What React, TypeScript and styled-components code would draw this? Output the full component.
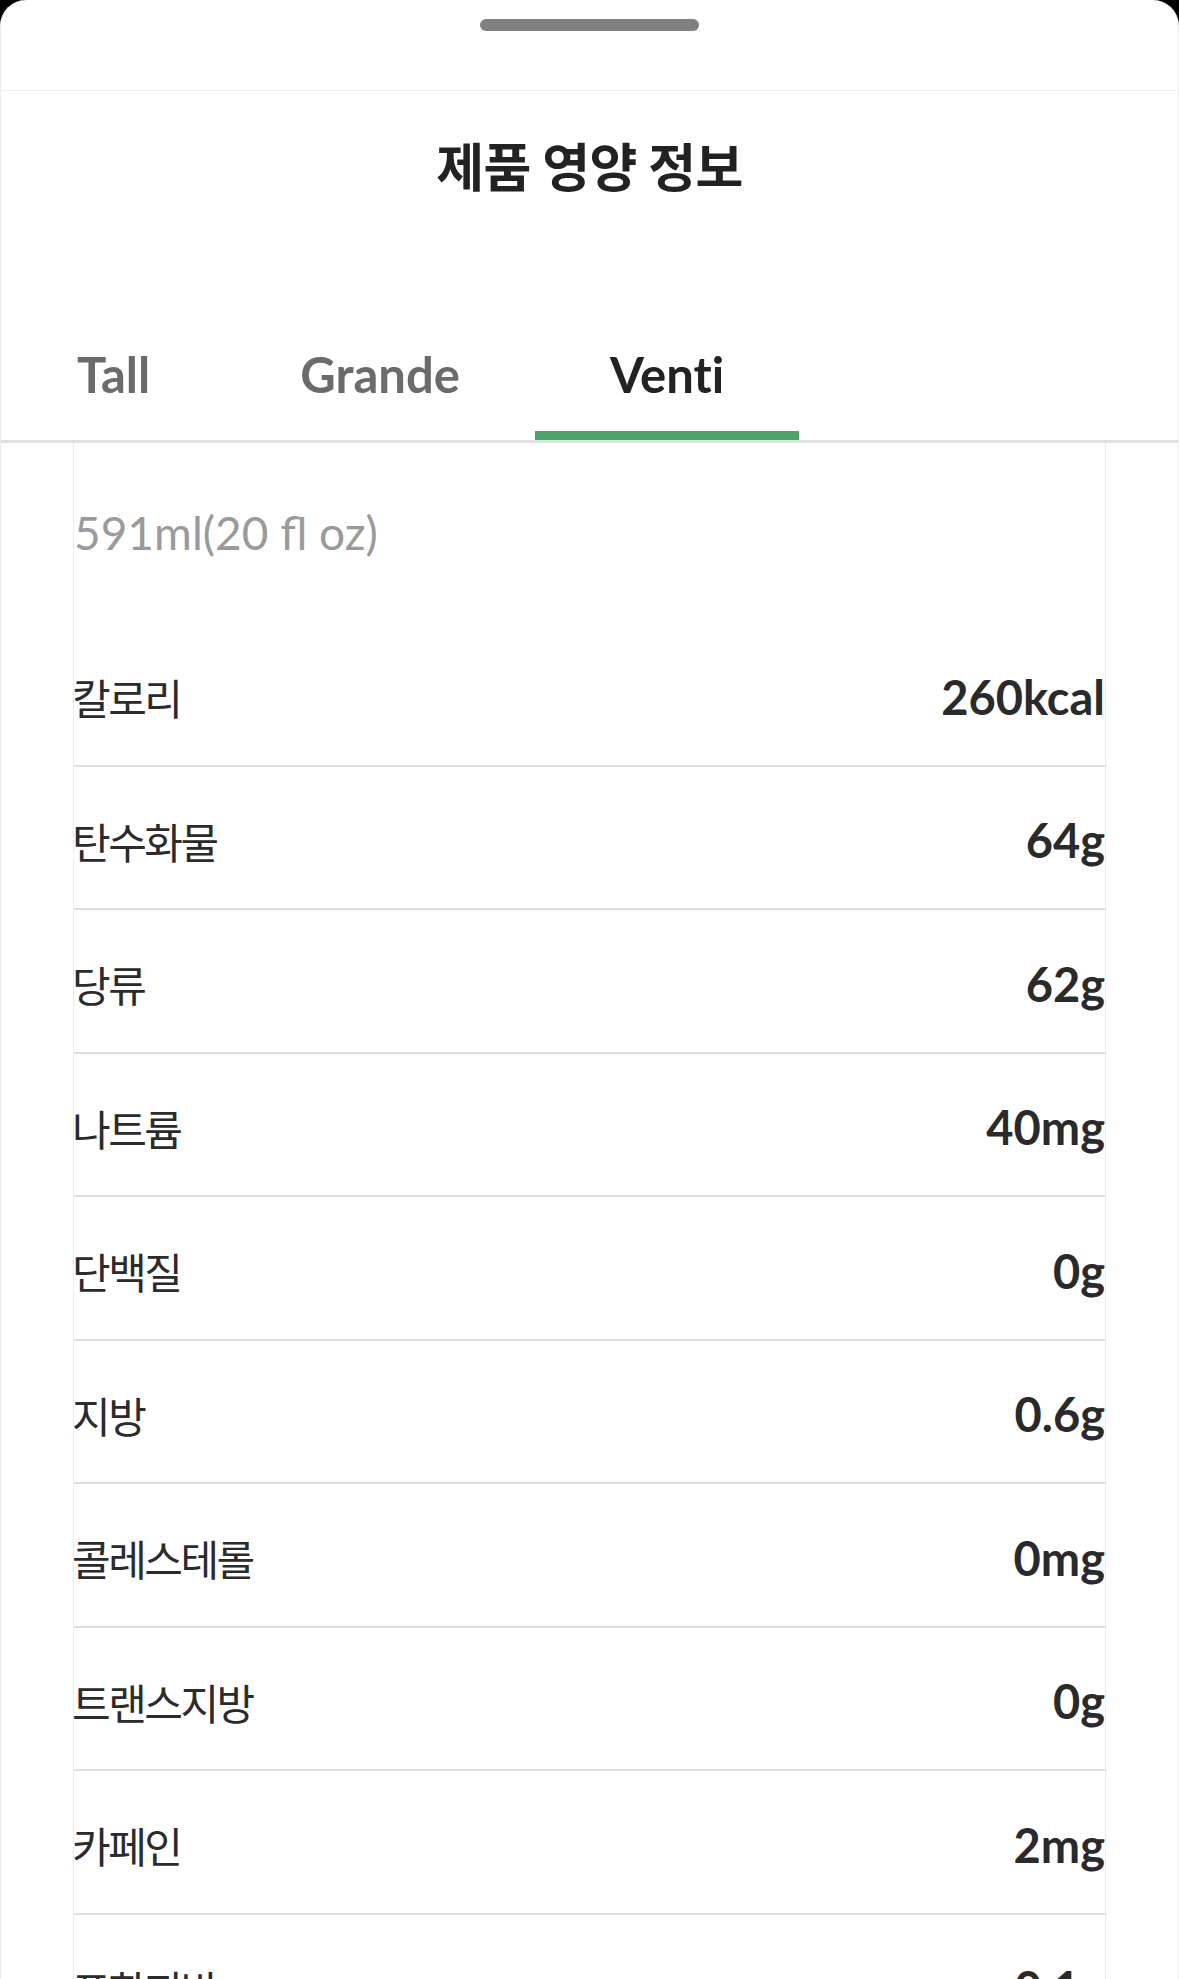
import React, { useState } from "react";
import styled, { createGlobalStyle } from "styled-components";

const GlobalStyle = createGlobalStyle`
  html, body {
    margin: 0;
    padding: 0;
    background: #000;
  }
  body {
    font-family: Lato, "Noto Sans CJK KR", sans-serif;
    -webkit-font-smoothing: antialiased;
  }
`;

const Sheet = styled.div`
  width: 1179px;
  height: 1979px;
  box-sizing: border-box;
  background: #fff;
  border-radius: 26px 26px 0 0;
  border-left: 1px solid #ececec;
  border-right: 1px solid #ececec;
  overflow: hidden;
`;

const HandleBar = styled.div`
  height: 91px;
  box-sizing: border-box;
  border-bottom: 1px solid #efefef;
  display: flex;
  justify-content: center;
  padding-top: 19px;
`;

const Handle = styled.div`
  width: 219px;
  height: 12px;
  border-radius: 6px;
  background: #808080;
`;

const Title = styled.h1`
  margin: 0;
  padding-top: 40px;
  height: 200px;
  box-sizing: border-box;
  text-align: center;
  font-family: "Noto Sans CJK KR", sans-serif;
  font-weight: 700;
  font-size: 52px;
  line-height: 68px;
  letter-spacing: -0.5px;
  color: #222;
`;

const TabList = styled.div`
  display: flex;
  border-bottom: 3px solid #e0e0e0;
  padding-left: 1px;
`;

const Tab = styled.button<{ $active?: boolean }>`
  appearance: none;
  background: none;
  border: none;
  margin: 0;
  padding: 26px 75px 0;
  height: 149px;
  box-sizing: border-box;
  font-family: Lato, sans-serif;
  font-weight: 700;
  font-size: 49px;
  line-height: 56px;
  font-variant-ligatures: none;
  color: ${(p) => (p.$active ? "#222" : "#6b6b6b")};
  border-bottom: 9px solid ${(p) => (p.$active ? "#47a567" : "transparent")};
  cursor: pointer;
`;

const Content = styled.div`
  margin: 0 72px;
  border-left: 1px solid #e6eeee;
  border-right: 1px solid #e6eeee;
`;

const SizeLabel = styled.div`
  height: 180px;
  box-sizing: border-box;
  padding-top: 62px;
  font-family: Lato, sans-serif;
  font-weight: 400;
  font-size: 46px;
  line-height: 56px;
  color: #9a9a9a;
`;

const Row = styled.div`
  height: 143.5px;
  box-sizing: border-box;
  display: flex;
  align-items: center;
  justify-content: space-between;
  border-bottom: 2px solid #dedede;
  padding-top: 6px;
`;

const Label = styled.span`
  margin-left: -2px;
  font-family: "Noto Sans CJK KR", sans-serif;
  font-weight: 400;
  font-size: 42px;
  letter-spacing: -2.5px;
  color: #2b2b2b;
`;

const Value = styled.span`
  font-family: Lato, sans-serif;
  font-weight: 700;
  font-size: 47px;
  color: #2a2a2a;
`;

const sizes = ["Tall", "Grande", "Venti"];

const nutrition: [string, string][] = [
  ["칼로리", "260kcal"],
  ["탄수화물", "64g"],
  ["당류", "62g"],
  ["나트륨", "40mg"],
  ["단백질", "0g"],
  ["지방", "0.6g"],
  ["콜레스테롤", "0mg"],
  ["트랜스지방", "0g"],
  ["카페인", "2mg"],
  ["포화지방", "0.1g"],
];

export default function App() {
  const [active, setActive] = useState(2);
  return (
    <>
      <GlobalStyle />
      <Sheet>
        <HandleBar>
          <Handle />
        </HandleBar>
        <Title>제품 영양 정보</Title>
        <TabList>
          {sizes.map((s, i) => (
            <Tab key={s} $active={i === active} onClick={() => setActive(i)}>
              {s}
            </Tab>
          ))}
        </TabList>
        <Content>
          <SizeLabel>591ml(20 fl oz)</SizeLabel>
          {nutrition.map(([k, v]) => (
            <Row key={k}>
              <Label>{k}</Label>
              <Value>{v}</Value>
            </Row>
          ))}
        </Content>
      </Sheet>
    </>
  );
}
